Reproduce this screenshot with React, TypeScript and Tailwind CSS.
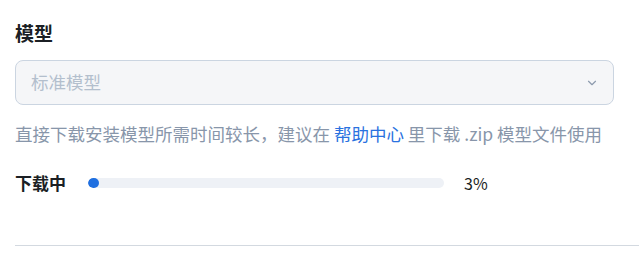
import { ChevronDown } from 'lucide-react';

export default function App() {
  const progress = 3;

  return (
    <div className="w-[639px] h-[259px] bg-white overflow-hidden font-['Noto_Sans_CJK_SC','Noto_Sans',sans-serif]">
      <div className="pl-[15px] pt-[20px]">
        <h2 className="text-[19px] leading-[26px] font-bold text-[#1b1f24]">模型</h2>

        <div className="mt-[14px] w-[599px] h-[45px] rounded-[8px] border border-[#cbd5e1] bg-[#f5f6f8] flex items-center justify-between pl-[15px] pr-[14px]">
          <span className="text-[17.5px] text-[#b3bfcd]">标准模型</span>
          <ChevronDown size={14} strokeWidth={2} className="text-[#8d9bae]" />
        </div>

        <p className="mt-[16px] text-[17.5px] leading-[26px] text-[#8896aa] whitespace-nowrap">
          直接下载安装模型所需时间较长，建议在 <span className="text-[#2a72e0]">帮助中心</span> 里下载 .zip 模型文件使用
        </p>

        <div className="mt-[23px] flex items-center h-[26px]">
          <span className="w-[73px] text-[17px] font-bold text-[#1b1f24]">下载中</span>
          <div className="w-[356px] h-[10px] rounded-full bg-[#eef1f6] overflow-hidden">
            <div
              className="h-full rounded-full bg-[#1f6fe0] min-w-[10px]"
              style={{ width: `${progress}%` }}
            />
          </div>
          <span className="ml-[20px] text-[16px] text-[#1b1f24]">{progress}%</span>
        </div>

        <div className="mt-[49px] h-px bg-[#d3d9e0]" />
      </div>
    </div>
  );
}
